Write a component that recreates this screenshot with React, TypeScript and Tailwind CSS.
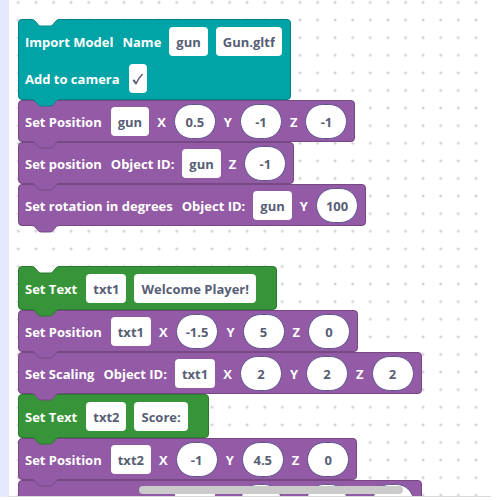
import React, { useId } from "react";

type Part =
  | { kind: "text"; value: string }
  | { kind: "field"; name: string; value: string }
  | { kind: "number"; name: string; value: string }
  | { kind: "check"; name: string };

type Tone = "teal" | "purple" | "green";

type BlockData = { tone: Tone; rows: Part[][] };

const tones = {
  teal: { box: "bg-[#00a4a6] border-[#008385] pr-2", fill: "#00a4a6", edge: "#008385", row: "h-[29px]" },
  purple: { box: "bg-[#935ba5] border-[#764984] pr-[7px]", fill: "#935ba5", edge: "#764984", row: "h-10 pt-px" },
  green: { box: "bg-[#389438] border-[#2d762d] pr-5", fill: "#389438", edge: "#2d762d", row: "h-[42px]" },
};

const text = (value: string): Part => ({ kind: "text", value });
const field = (name: string, value: string): Part => ({ kind: "field", name, value });
const num = (name: string, value: string): Part[] => [text(name), { kind: "number", name, value }];

const position = (id: string, x: string, y: string, z: string): BlockData => ({
  tone: "purple",
  rows: [[text("Set Position"), field("Object", id), ...num("X", x), ...num("Y", y), ...num("Z", z)]],
});

const scaling = (id: string, s: string): BlockData => ({
  tone: "purple",
  rows: [[text("Set Scaling"), text("Object ID:"), field("Object ID", id), ...num("X", s), ...num("Y", s), ...num("Z", s)]],
});

const setText = (id: string, value: string): BlockData => ({
  tone: "green",
  rows: [[text("Set Text"), field("Object", id), field("Text", value)]],
});

const stacks: BlockData[][] = [
  [
    {
      tone: "teal",
      rows: [
        [text("Import Model"), text("Name"), field("Name", "gun"), field("File", "Gun.gltf")],
        [{ kind: "check", name: "Add to camera" }],
      ],
    },
    position("gun", "0.5", "-1", "-1"),
    { tone: "purple", rows: [[text("Set position"), text("Object ID:"), field("Object ID", "gun"), ...num("Z", "-1")]] },
    {
      tone: "purple",
      rows: [[text("Set rotation in degrees"), text("Object ID:"), field("Object ID", "gun"), ...num("Y", "100")]],
    },
  ],
  [
    setText("txt1", "Welcome Player!"),
    position("txt1", "-1.5", "5", "0"),
    scaling("txt1", "2"),
    setText("txt2", "Score:"),
    position("txt2", "-1", "4.5", "0"),
    scaling("txt2", "2"),
  ],
];

function Notch({ fill, edge, place }: { fill: string; edge: string; place: string }) {
  return (
    <svg className={`absolute left-[11px] z-10 ${place}`} width="32" height="9" viewBox="0 0 32 9" aria-hidden="true">
      <path d="M0 0 H1 C3 0 4 1 5 2 L8 5.5 C9 6.7 10 7 11.5 7 H19.5 C21 7 22 6.7 23 5.5 L26 2 C27 1 28 0 30 0 Z" fill={fill} />
      <path d="M1 .5 C3 .5 4 1 5 2 L8 5.5 C9 6.7 10 7 11.5 7 H19.5 C21 7 22 6.7 23 5.5 L26 2 C27 1 28 .5 30 .5" fill="none" stroke={edge} strokeWidth="1" />
    </svg>
  );
}

function PartView({ part }: { part: Part }) {
  const id = useId();
  if (part.kind === "text") return <span className="pt-px first:pr-px">{part.value}</span>;
  if (part.kind === "check")
    return (
      <>
        <label htmlFor={id} className="pt-px pr-px">{part.name}</label>
        <span className="grid h-[29px] w-[18px] place-items-center">
          <input id={id} type="checkbox" defaultChecked className="peer col-start-1 row-start-1 h-full w-full appearance-none rounded bg-white" />
          <svg className="pointer-events-none col-start-1 row-start-1 hidden peer-checked:block" width="12" height="14" viewBox="0 0 12 14" aria-hidden="true">
            <path d="M1.2 8.2 L4 11.8 Q6.5 6 10.6 2" fill="none" stroke="#575e75" strokeWidth="1.5" strokeLinejoin="round" />
            <path d="M.8 8 Q2.4 6.6 3.2 8.4 L4.2 11.6 Z" fill="#575e75" />
          </svg>
        </span>
      </>
    );
  if (part.kind === "number")
    return (
      <input
        aria-label={part.name}
        defaultValue={part.value}
        className="field-sizing-content h-[35px] min-w-[42px] rounded-full border border-[#5f5490] bg-white px-[9px] pt-px text-center text-[#575e75]"
      />
    );
  return (
    <input
      aria-label={part.name}
      defaultValue={part.value}
      className="field-sizing-content h-[29px] rounded bg-white px-[7px] pt-px text-center text-[#575e75]"
    />
  );
}

function Block({ data, first }: { data: BlockData; first: boolean }) {
  const tone = tones[data.tone];
  return (
    <li className={`relative flex w-fit flex-col gap-2 rounded border pl-[6px] ${tone.box} ${data.tone === "teal" ? "pt-[7px] pb-[6px]" : ""}`}>
      {first && <Notch fill="#ffffff" edge={tone.edge} place="-top-px" />}
      {data.rows.map((row, i) => (
        <div key={i} className={`flex items-center gap-2 whitespace-pre ${tone.row}`}>
          {row.map((part, j) => (
            <PartView key={j} part={part} />
          ))}
        </div>
      ))}
      <Notch fill={tone.fill} edge={tone.edge} place="top-full" />
    </li>
  );
}

export default function App() {
  return (
    <div className="flex h-screen bg-white pr-[9px] pb-[3px] font-['Open_Sans',sans-serif] text-[13px] leading-5 font-bold text-white">
      <div className="w-[9px] shrink-0 bg-[#e4e9fd]" />
      <main className="relative min-w-0 grow overflow-hidden border-b border-[#dddddd]">
        <svg className="absolute inset-0 h-full w-full" aria-hidden="true">
          <defs>
            <pattern id="grid" x="0.5" y="-6.3" width="17.6" height="17.6" patternUnits="userSpaceOnUse">
              <path d="M7.3 8.8 H10.3 M8.8 7.3 V10.3" stroke="#c4c4c4" strokeWidth="1" />
            </pattern>
          </defs>
          <rect width="100%" height="100%" fill="url(#grid)" />
        </svg>
        <div className="relative flex flex-col gap-10 pt-[19px] pl-[9px]">
          {stacks.map((stack, i) => (
            <ul key={i}>
              {stack.map((block, j) => (
                <Block key={j} data={block} first={j === 0} />
              ))}
            </ul>
          ))}
        </div>
        <div className="absolute bottom-[2px] left-[27%] z-20 h-2 w-[264px] rounded-full bg-[#cbcbcb]" />
      </main>
    </div>
  );
}
